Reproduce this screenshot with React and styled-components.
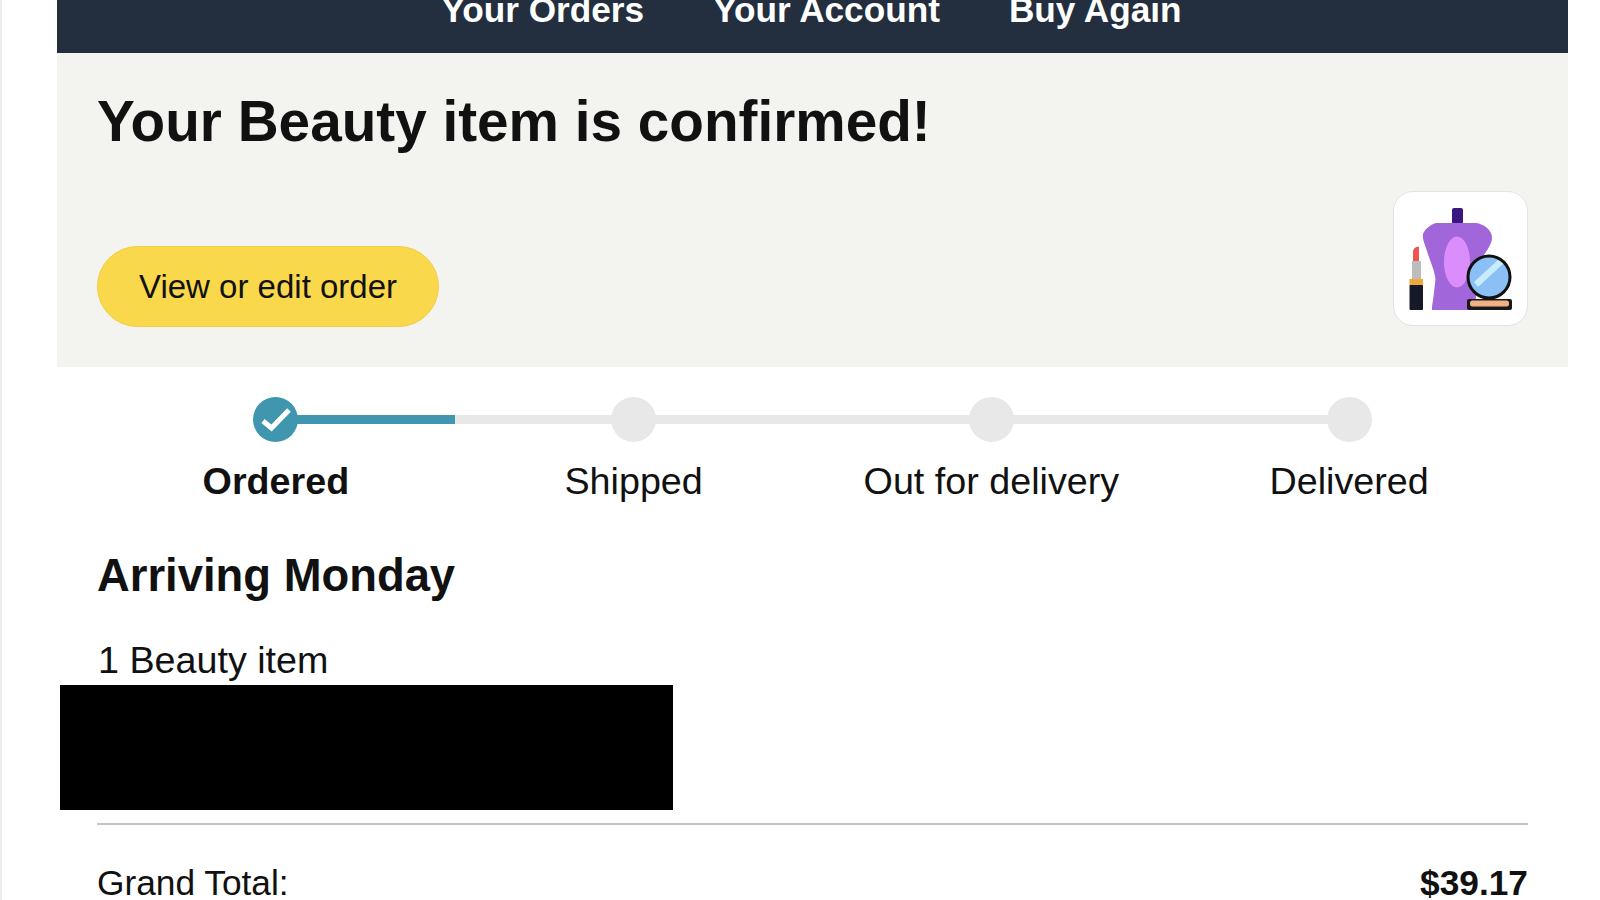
import React from 'react';
import styled, { createGlobalStyle } from 'styled-components';

const GlobalStyle = createGlobalStyle`
  html, body {
    margin: 0;
    height: 900px;
    overflow: hidden;
    background: #fff;
    font-family: "Liberation Sans", Arial, sans-serif;
    color: #111;
  }
`;

const Page = styled.div`
  height: 900px;
  overflow: hidden;
  padding-left: 55px;
  padding-right: 32px;
  border-left: 2px solid #ececec;
  box-sizing: border-box;
`;

const Header = styled.header`
  height: 53px;
  background: #232f3e;
  display: flex;
  justify-content: center;
  gap: 69px;
  padding-right: 2px;
  box-sizing: border-box;
`;

const NavLink = styled.a`
  color: #fff;
  font-size: 35.2px;
  font-weight: 700;
  line-height: 20px;
  white-space: nowrap;
`;

const Hero = styled.section`
  height: 314px;
  background: #f3f3f0;
  box-sizing: border-box;
  padding: 0 40px;
  display: flex;
  flex-direction: column;
`;

const Title = styled.h1`
  margin: 39px 0 0;
  font-size: 56.7px;
  line-height: 60px;
  font-weight: 700;
`;

const HeroRow = styled.div`
  margin-top: 39px;
  display: flex;
  justify-content: space-between;
  align-items: flex-end;
`;

const Button = styled.button`
  width: 342px;
  height: 81px;
  border: 1px solid #f2ce3e;
  border-radius: 41px;
  background: #fad84c;
  color: #111;
  font-family: inherit;
  font-size: 33px;
  margin-bottom: 1px;
`;

const IconTile = styled.div`
  width: 135px;
  height: 135px;
  background: #fff;
  border: 1px solid #e3e3e3;
  border-radius: 20px;
  box-sizing: border-box;
  margin-bottom: 2px;

  svg {
    display: block;
    width: 100%;
    height: 100%;
  }
`;

const Body = styled.div`
  padding: 0 40px;
`;

const Stepper = styled.ol`
  list-style: none;
  margin: 0;
  padding: 30px 0 0;
  display: grid;
  grid-template-columns: repeat(4, 1fr);
`;

const Step = styled.li`
  position: relative;
  display: flex;
  flex-direction: column;
  align-items: center;
`;

const Track = styled.span`
  position: absolute;
  top: 18px;
  left: 50%;
  width: 100%;
  height: 9px;
  background: #e8e8e8;

  &::before {
    content: '';
    display: block;
    height: 100%;
    width: ${props => props.$fill || 0}%;
    background: #3f96ae;
  }
`;

const Dot = styled.span`
  position: relative;
  width: 45px;
  height: 45px;
  border-radius: 50%;
  background: ${props => (props.$done ? '#3f96ae' : '#e8e8e8')};

  svg {
    display: block;
  }
`;

const StepLabel = styled.span`
  margin-top: 19px;
  font-size: 37.7px;
  line-height: 40px;
  font-weight: ${props => (props.$active ? 700 : 400)};
  white-space: nowrap;
`;

const Arriving = styled.h2`
  margin: 50px 0 0;
  font-size: 45.4px;
  line-height: 50px;
  font-weight: 700;
`;

const Count = styled.p`
  margin: 38px 0 0 1px;
  font-size: 37.7px;
  line-height: 42px;
`;

const Redacted = styled.div`
  width: 613px;
  height: 125px;
  margin: 4px 0 0 -37px;
  background: #000;
`;

const Totals = styled.div`
  margin-top: 13px;
  border-top: 2px solid #c4c4c4;
  padding-top: 38px;
  display: flex;
  justify-content: space-between;
  font-size: 35.3px;
  line-height: 40px;
`;

const Amount = styled.span`
  font-weight: 700;
`;

const BeautyIcon = () => (
  <svg viewBox="0 0 133 133">
    <rect x="58" y="16" width="11" height="16" rx="2" fill="#3a1780" />
    <path
      d="M42 31 H82 C90 32 98 38 98 46 C98 52 92 60 88 66 L80 118 H38 C38 112 39 110 40 100 C41 92 42 86 41 84 C39 74 35 66 33 59 C31 53 28 47 29 42 C31 37 36 33 42 31 Z"
      fill="#a066da"
    />
    <ellipse cx="63" cy="70" rx="13" ry="25.5" fill="#dc8dfc" />
    <path d="M19 69 V60 C19 57 22 54 25 55 V69 Z" fill="#ee5550" />
    <rect x="18" y="69" width="9" height="18" fill="#bdbdbd" />
    <rect x="15.5" y="87" width="13.5" height="7" fill="#f0a838" />
    <rect x="15.5" y="93" width="13.5" height="25" rx="1" fill="#141a28" />
    <rect x="73" y="107" width="45" height="11" rx="2" fill="#1a1a1a" />
    <rect x="76" y="108.5" width="39" height="6" rx="2.5" fill="#f2b184" />
    <circle cx="95" cy="85" r="21" fill="#8bc0f6" />
    <path d="M80 90 L105 67 L110 71 L84 95 Z" fill="#c8ecfc" />
    <circle cx="95" cy="85" r="21" fill="none" stroke="#111" strokeWidth="3" />
  </svg>
);

const CheckMark = () => (
  <svg width="45" height="45" viewBox="0 0 45 45">
    <path d="M10 24 L18.5 31 L36 13" fill="none" stroke="#fff" strokeWidth="5" />
  </svg>
);

const steps = ['Ordered', 'Shipped', 'Out for delivery', 'Delivered'];

const App = () => (
  <>
    <GlobalStyle />
    <Page>
      <Header>
        <NavLink>Your Orders</NavLink>
        <NavLink>Your Account</NavLink>
        <NavLink>Buy Again</NavLink>
      </Header>
      <Hero>
        <Title>Your Beauty item is confirmed!</Title>
        <HeroRow>
          <Button>View or edit order</Button>
          <IconTile>
            <BeautyIcon />
          </IconTile>
        </HeroRow>
      </Hero>
      <Body>
        <Stepper>
          {steps.map((label, i) => (
            <Step key={label}>
              {i < steps.length - 1 && <Track $fill={i === 0 ? 50 : 0} />}
              <Dot $done={i === 0}>{i === 0 && <CheckMark />}</Dot>
              <StepLabel $active={i === 0}>{label}</StepLabel>
            </Step>
          ))}
        </Stepper>
        <Arriving>Arriving Monday</Arriving>
        <Count>1 Beauty item</Count>
        <Redacted />
        <Totals>
          <span>Grand Total:</span>
          <Amount>$39.17</Amount>
        </Totals>
      </Body>
    </Page>
  </>
);

export default App;
